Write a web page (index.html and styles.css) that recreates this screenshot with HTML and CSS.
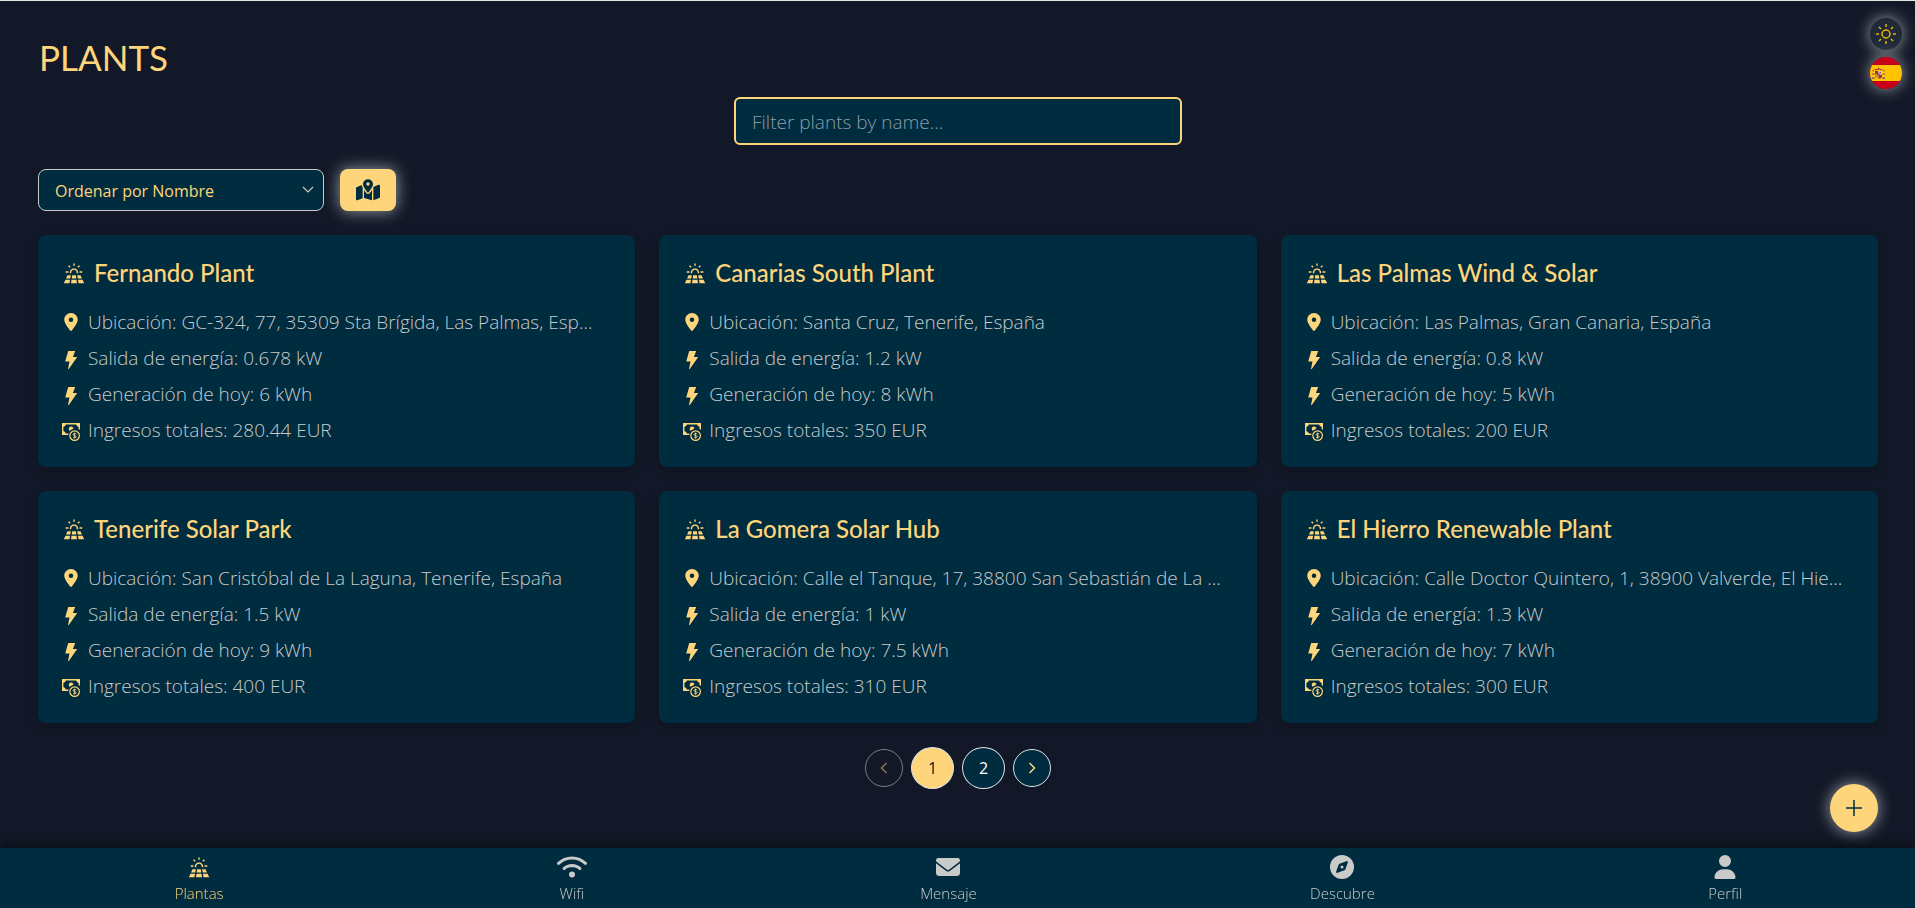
FILE: index.html
```html
<!DOCTYPE html>
<html lang="es">
<head>
<meta charset="utf-8">
<meta name="viewport" content="width=device-width, initial-scale=1">
<title>Plants</title>
<link rel="stylesheet" href="styles.css">
</head>
<body>
<svg class="sprite" aria-hidden="true">
  <symbol id="solar" viewBox="0 0 24 24">
    <path d="M11.200.600h1.600v2.600h-1.600zM5.200 3.700l1.100-1.100 1.800 1.800L7 5.500zM17.700 2.600l1.100 1.100L17 5.500l-1.100-1.100zM2.500 9.500h3.200V11H2.500zM18.300 9.500h3.200V11h-3.200z"/>
    <path d="M7.200 11.600C7 8.600 9 6.200 12 6.200s5 2.400 4.800 5.400h-1.600C15.300 9.400 14 7.800 12 7.800s-3.300 1.600-3.200 3.800z"/>
    <path d="M4.600 13.900h3.800l-.7 3.700H2.900zM9.900 13.900h4.200l.5 3.700H9.400zM15.600 13.900h3.800l1.700 3.700h-4.800zM2.300 19h5.200l-.7 4.200H.3zM9.100 19h5.800l.5 4.200H8.600zM16.500 19h5.200l2 4.200h-6.500z"/>
  </symbol>
  <symbol id="pin" viewBox="0 0 384 512"><path d="M215.700 499.200C267 435 384 279.400 384 192 384 86 298 0 192 0S0 86 0 192c0 87.400 117 243 168.300 307.200 12.300 15.300 35.100 15.300 47.400 0zM192 128a64 64 0 1 1 0 128 64 64 0 1 1 0-128z"/></symbol>
  <symbol id="bolt" viewBox="0 0 18 18"><path d="M6.200 0h7l-2.300 6h4.300L6.800 18H6l1.500-7.500H3.200z"/></symbol>
  <symbol id="money" viewBox="0 0 18 18">
    <path d="M17.300 6.500V.7H.7v10.600h5.600" fill="none" stroke="currentColor" stroke-width="1.400"/>
    <path d="M0 0h4a4 4 0 0 1-4 4zM18 0h-4a4 4 0 0 0 4 4zM0 12h4a4 4 0 0 0-4-4zM11.500 5.500A2.400 2.400 0 1 0 7.500 7.700z"/>
    <circle cx="12.600" cy="12.600" r="4.800" fill="none" stroke="currentColor" stroke-width="1.200"/>
    <path d="M14.200 11.200c-.3-.9-3.200-1-3.200.3s3.200.9 3.200 2.200-2.900 1.200-3.200.2M12.600 9.600v6" fill="none" stroke="currentColor" stroke-width=".9"/>
  </symbol>
</svg>

<div class="quick">
  <button class="round" aria-label="Tema"><svg class="sun" viewBox="0 0 20 20"><circle cx="10" cy="10" r="4"/><path d="M10 0v3M10 17v3M0 10h3M17 10h3M3 3l2 2M15 15l2 2M17 3l-2 2M5 15l-2 2"/></svg></button>
  <button class="round" aria-label="Idioma"><svg class="flag" viewBox="0 0 32 32">
    <path fill="#c8001a" d="M0 0h32v32H0z"/><path fill="#ffc400" d="M0 8h32v16H0z"/>
    <path fill="#a8323a" d="M5 14h3.500v3.500H5zM8.500 17.500H12V20l-1.500 1.500h-2zM5 12h2v1.200H5zM7.500 11h2v2h-2zM10.200 12h2v1.200h-2z"/>
    <path fill="#d9cfd6" d="M8.500 14H12v3.500H8.500zM2.800 15H4v5H2.800zM13 15h1.200v5H13z"/>
    <path fill="#d8862a" d="M5 17.500h3.500v4L6 20.500l-1-1z"/>
    <path fill="#3b5b9c" d="M2.200 20.300h2.300v1.400H2.200zM12.500 20.300h2.300v1.400h-2.300zM7.600 16.400h1.800v1.800H7.600z"/>
    <path fill="#8d2a3c" d="M2 16.500h2.400v1H2zM12.600 16.500H15v1h-2.400zM2.600 13.300H4v1H2.600zM13 13.300h1.400v1H13zM9.600 15h1.200v1.400H9.600z"/>
  </svg></button>
</div>

<main class="page">
  <h1 class="heading">PLANTS</h1>
  <input class="search" type="text" placeholder="Filter plants by name..." aria-label="Filter plants by name">
  <div class="tools">
    <div class="sort">
      <select class="sort-select" aria-label="Ordenar"><option>Ordenar por Nombre</option></select>
      <svg class="sort-arrow" viewBox="0 0 12 8"><path d="m1 1 5 5 5-5"/></svg>
    </div>
    <button class="map" aria-label="Mapa"><svg viewBox="0 0 576 512"><path d="M408 120c0 54.600-73.100 151.900-105.200 192-7.700 9.600-22 9.600-29.600 0C241.100 271.900 168 174.600 168 120 168 53.700 221.700 0 288 0s120 53.700 120 120zm8 80.400c3.500-6.900 6.700-13.800 9.600-20.600.5-1.200 1-2.500 1.500-3.700l116-46.400c15.800-6.300 32.900 5.300 32.900 22.300v270.800c0 9.800-6 18.600-15.100 22.300L416 503.200V200.400zM137.600 138.300c2.400 14.100 7.200 28.300 12.800 41.500 2.900 6.800 6.100 13.700 9.600 20.600v251.400L32.900 502.700C17.100 509 0 497.400 0 480.400V209.600c0-9.800 6-18.600 15.100-22.300l122.600-49zM327.800 332c13.900-17.400 35.700-45.700 56.200-77v249.300l-192-54.900V255c20.500 31.300 42.300 59.600 56.200 77 20.500 25.600 59.100 25.600 79.600 0zM288 152a40 40 0 1 0 0-80 40 40 0 1 0 0 80z"/></svg></button>
  </div>

  <section class="grid">
    <article class="card">
      <h2 class="name"><svg class="i-solar"><use href="#solar"/></svg>Fernando Plant</h2>
      <p class="row"><svg class="i-pin"><use href="#pin"/></svg><span class="text">Ubicación: GC-324, 77, 35309 Sta Brígida, Las Palmas, Esp...</span></p>
      <p class="row"><svg class="i-low"><use href="#bolt"/></svg><span class="text">Salida de energía: 0.678 kW</span></p>
      <p class="row"><svg class="i-low"><use href="#bolt"/></svg><span class="text">Generación de hoy: 6 kWh</span></p>
      <p class="row"><svg class="i-low"><use href="#money"/></svg><span class="text">Ingresos totales: 280.44 EUR</span></p>
    </article>
    <article class="card">
      <h2 class="name"><svg class="i-solar"><use href="#solar"/></svg>Canarias South Plant</h2>
      <p class="row"><svg class="i-pin"><use href="#pin"/></svg><span class="text">Ubicación: Santa Cruz, Tenerife, España</span></p>
      <p class="row"><svg class="i-low"><use href="#bolt"/></svg><span class="text">Salida de energía: 1.2 kW</span></p>
      <p class="row"><svg class="i-low"><use href="#bolt"/></svg><span class="text">Generación de hoy: 8 kWh</span></p>
      <p class="row"><svg class="i-low"><use href="#money"/></svg><span class="text">Ingresos totales: 350 EUR</span></p>
    </article>
    <article class="card">
      <h2 class="name"><svg class="i-solar"><use href="#solar"/></svg>Las Palmas Wind &amp; Solar</h2>
      <p class="row"><svg class="i-pin"><use href="#pin"/></svg><span class="text">Ubicación: Las Palmas, Gran Canaria, España</span></p>
      <p class="row"><svg class="i-low"><use href="#bolt"/></svg><span class="text">Salida de energía: 0.8 kW</span></p>
      <p class="row"><svg class="i-low"><use href="#bolt"/></svg><span class="text">Generación de hoy: 5 kWh</span></p>
      <p class="row"><svg class="i-low"><use href="#money"/></svg><span class="text">Ingresos totales: 200 EUR</span></p>
    </article>
    <article class="card">
      <h2 class="name"><svg class="i-solar"><use href="#solar"/></svg>Tenerife Solar Park</h2>
      <p class="row"><svg class="i-pin"><use href="#pin"/></svg><span class="text">Ubicación: San Cristóbal de La Laguna, Tenerife, España</span></p>
      <p class="row"><svg class="i-low"><use href="#bolt"/></svg><span class="text">Salida de energía: 1.5 kW</span></p>
      <p class="row"><svg class="i-low"><use href="#bolt"/></svg><span class="text">Generación de hoy: 9 kWh</span></p>
      <p class="row"><svg class="i-low"><use href="#money"/></svg><span class="text">Ingresos totales: 400 EUR</span></p>
    </article>
    <article class="card">
      <h2 class="name"><svg class="i-solar"><use href="#solar"/></svg>La Gomera Solar Hub</h2>
      <p class="row"><svg class="i-pin"><use href="#pin"/></svg><span class="text">Ubicación: Calle el Tanque, 17, 38800 San Sebastián de La ...</span></p>
      <p class="row"><svg class="i-low"><use href="#bolt"/></svg><span class="text">Salida de energía: 1 kW</span></p>
      <p class="row"><svg class="i-low"><use href="#bolt"/></svg><span class="text">Generación de hoy: 7.5 kWh</span></p>
      <p class="row"><svg class="i-low"><use href="#money"/></svg><span class="text">Ingresos totales: 310 EUR</span></p>
    </article>
    <article class="card">
      <h2 class="name"><svg class="i-solar"><use href="#solar"/></svg>El Hierro Renewable Plant</h2>
      <p class="row"><svg class="i-pin"><use href="#pin"/></svg><span class="text">Ubicación: Calle Doctor Quintero, 1, 38900 Valverde, El Hie...</span></p>
      <p class="row"><svg class="i-low"><use href="#bolt"/></svg><span class="text">Salida de energía: 1.3 kW</span></p>
      <p class="row"><svg class="i-low"><use href="#bolt"/></svg><span class="text">Generación de hoy: 7 kWh</span></p>
      <p class="row"><svg class="i-low"><use href="#money"/></svg><span class="text">Ingresos totales: 300 EUR</span></p>
    </article>
  </section>

  <div class="pager">
    <button class="step" disabled aria-label="Anterior"><svg viewBox="0 0 8 12"><path d="M6.500 1 1.500 6l5 5"/></svg></button>
    <button class="num current">1</button>
    <button class="num">2</button>
    <button class="step" aria-label="Siguiente"><svg viewBox="0 0 8 12"><path d="m1.500 1 5 5-5 5"/></svg></button>
  </div>
</main>

<button class="add" aria-label="Añadir"><svg viewBox="0 0 16 16"><path d="M8 0v16M0 8h16"/></svg></button>

<nav class="nav">
  <a class="tab active" href="#plantas"><svg class="panel"><use href="#solar"/></svg>Plantas</a>
  <a class="tab" href="#wifi"><svg class="wifi" viewBox="0 0 640 512"><path d="M54.200 202.900C123.200 136.700 216.800 96 320 96s196.800 40.700 265.800 106.900c12.800 12.200 33 11.800 45.200-.9s11.800-33-.9-45.200C549.700 79.500 440.400 32 320 32S90.300 79.500 9.800 156.700C-2.900 169-3.300 189.200 8.900 202s32.500 13.200 45.200.9zM320 256c56.800 0 108.600 21.100 148.200 56 13.300 11.700 33.500 10.400 45.200-2.800s10.400-33.500-2.800-45.200C459.800 219.200 393 192 320 192s-139.800 27.200-190.500 72c-13.300 11.700-14.500 31.900-2.800 45.200s31.900 14.500 45.200 2.800c39.500-34.900 91.300-56 148.200-56zm64 160a64 64 0 1 0-128 0 64 64 0 1 0 128 0z"/></svg>Wifi</a>
  <a class="tab" href="#mensaje"><svg viewBox="0 0 512 512"><path d="M48 64C21.500 64 0 85.500 0 112c0 15.100 7.100 29.300 19.200 38.400l217.600 163.200c11.400 8.500 27 8.500 38.400 0l217.600-163.200c12.100-9.100 19.200-23.300 19.200-38.400 0-26.500-21.500-48-48-48H48zM0 176v208c0 35.300 28.700 64 64 64h384c35.300 0 64-28.700 64-64V176L294.400 339.200a64 64 0 0 1-76.800 0L0 176z"/></svg>Mensaje</a>
  <a class="tab" href="#descubre"><svg viewBox="0 0 512 512"><path d="M256 512A256 256 0 1 0 256 0a256 256 0 1 0 0 512zm50.700-186.900-144.300 55.500c-19.400 7.500-38.500-11.600-31-31l55.500-144.300c3.300-8.500 9.900-15.100 18.400-18.400l144.300-55.500c19.400-7.500 38.500 11.600 31 31l-55.500 144.300c-3.200 8.500-9.900 15.100-18.400 18.400zM288 256a32 32 0 1 0-64 0 32 32 0 1 0 64 0z"/></svg>Descubre</a>
  <a class="tab" href="#perfil"><svg viewBox="0 0 448 512"><path d="M224 256A128 128 0 1 0 224 0a128 128 0 1 0 0 256zm-45.700 48C79.800 304 0 383.800 0 482.300 0 498.700 13.300 512 29.700 512h388.600c16.400 0 29.700-13.300 29.700-29.700C448 383.800 368.200 304 269.700 304h-91.400z"/></svg>Perfil</a>
</nav>
</body>
</html>
```
FILE: styles.css
```css
* { box-sizing: border-box; }
body {
  margin: 0;
  min-height: 100vh;
  display: flex;
  flex-direction: column;
  background: #121827;
  border-top: 1px solid #dfe7e4;
  color: #c9cbcb;
  font-family: "Open Sans", "Noto Sans", sans-serif;
  font-weight: 300;
}
button, input, select { font: inherit; }
button { padding: 0; border: 0; cursor: pointer; display: flex; align-items: center; justify-content: center; }
svg { display: block; fill: currentColor; flex: none; }
.sprite { position: absolute; width: 0; height: 0; }

.page { flex: 1; padding: 36px 37px 76px 38px; display: flex; flex-direction: column; }
.heading { margin: 0; padding-left: 1px; font: 400 35px/40px Lato, sans-serif; color: #ffd57b; }
.search {
  align-self: center;
  width: 448px;
  max-width: 100%;
  height: 48px;
  margin-top: 20px;
  padding: 2px 16px 0;
  border: 2px solid #ffd57b;
  border-radius: 6px;
  background: #002c3f;
  color: #c9cbcb;
  font-size: 19px;
}
.search::placeholder { color: #8c9ba6; opacity: 1; }
.tools { display: flex; gap: 16px; margin: 24px 0; }
.sort { position: relative; }
.sort-select {
  appearance: none;
  width: 286px;
  height: 42px;
  padding: 2px 36px 0 16px;
  border: 1px solid #c9cbcb;
  border-radius: 8px;
  background: #002c3f;
  color: #ffd57b;
  font-size: 16px;
  font-weight: 400;
}
.sort-arrow { position: absolute; right: 10px; top: 17px; width: 12px; height: 8px; fill: none; stroke: #c9cbcb; stroke-width: 1.200; pointer-events: none; }
.map { width: 56px; height: 42px; border-radius: 8px; background: #ffd57b; color: #002c3f; box-shadow: 0 0 16px rgba(255, 255, 255, .6); }
.map svg { width: 24px; height: 22px; }

.grid { display: grid; grid-template-columns: repeat(3, minmax(0, 1fr)); gap: 24px; }
.card { padding: 24px 24px 23px; border-radius: 8px; background: #002c3f; box-shadow: 0 4px 8px rgba(0, 0, 0, .2); }
.name { display: flex; align-items: center; gap: 8px; margin: 0 0 21px; font: 500 24px/28px Lato, sans-serif; color: #ffd57b; }
.row { display: flex; align-items: center; gap: 8px; margin: 0 0 8px; line-height: 28px; font-size: 19px; }
.row:last-child { margin-bottom: 0; }
.row svg { color: #ffd57b; width: 18px; height: 18px; }
.row .i-low { margin-top: 4px; }
.text { overflow: hidden; white-space: nowrap; text-overflow: ellipsis; min-width: 0; }
.i-solar { width: 24px; height: 21px; }

.pager { display: flex; justify-content: center; align-items: center; gap: 8px; margin-top: 24px; }
.num { width: 43px; height: 42px; border: 1px solid #dde2e5; border-radius: 50%; background: #002c3f; color: #fff; font-size: 16px; font-weight: 400; }
.num.current { background: #ffd57b; color: #121827; }
.step { width: 38px; height: 38px; border: 1px solid #dde2e5; border-radius: 50%; background: #002c3f; color: #ffd57b; }
.step:disabled { opacity: .5; background: transparent; }
.step svg { width: 8px; height: 12px; fill: none; stroke: currentColor; stroke-width: 1.500; }

.quick { position: fixed; top: 18px; right: 13px; display: flex; flex-direction: column; gap: 7px; }
.round { width: 32px; height: 32px; border-radius: 50%; overflow: hidden; background: #1f2937; box-shadow: 0 0 16px rgba(255, 255, 255, .6); }
.sun { width: 20px; height: 20px; fill: none; stroke: #eab308; stroke-width: 1.500; }
.flag { width: 32px; height: 32px; }
.add { position: fixed; right: 37px; bottom: 76px; width: 48px; height: 48px; border-radius: 50%; background: #ffd57b; box-shadow: 0 0 16px rgba(255, 255, 255, .6); }
.add svg { width: 16px; height: 16px; stroke: #002c3f; stroke-width: 1.500; }

.nav { position: fixed; left: 0; right: 0; bottom: 0; height: 60px; padding: 0 6px 0 8px; display: flex; justify-content: space-around; background: #002c3f; box-shadow: 0 -4px 10px rgba(0, 0, 0, .4); }
.tab { display: flex; flex-direction: column; align-items: center; gap: 4px; padding-top: 7px; color: #c9cbcb; text-decoration: none; font-size: 15px; line-height: 20px; }
.tab.active { color: #ffd57b; }
.tab svg { width: 24px; height: 24px; }
.tab .wifi { width: 30px; }
.tab .panel { height: 21px; margin: 2px 0 1px; }
```
